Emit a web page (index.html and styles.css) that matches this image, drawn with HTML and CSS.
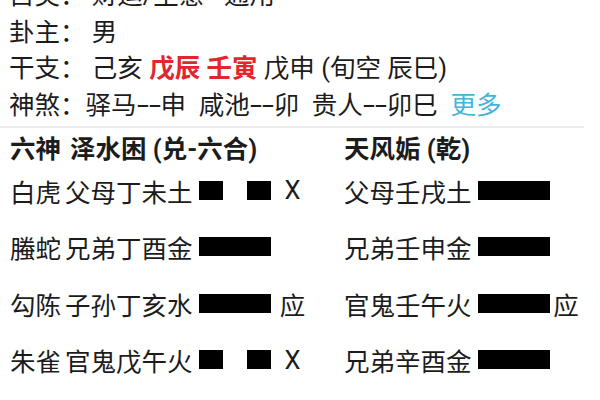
FILE: index.html
```html
<!DOCTYPE html>
<html lang="zh">
<head>
<meta charset="utf-8">
<link rel="stylesheet" href="styles.css">
</head>
<body>
<div class="info">
  <div class="row"><span class="lbl">占类：</span> 财运/生意 - 通用</div>
  <div class="row"><span class="lbl">卦主：</span> 男</div>
  <div class="row"><span class="lbl">干支：</span> 己亥 <span class="red">戊辰 壬寅</span> 戊申 (旬空 辰巳)</div>
  <div class="row"><span class="lbl">神煞：</span>驿马<span class="dash">--</span>申 &nbsp;咸池<span class="dash">--</span>卯 &nbsp;贵人<span class="dash">--</span>卯巳 &nbsp;<span class="more">更多</span></div>
</div>
<div class="sep"></div>
<div class="hex">
  <div class="cell god head">六神</div>
  <div class="cell left head"><span class="gua">泽水困 (兑-六合)</span></div>
  <div class="cell right head">天风姤 (乾)</div>

  <div class="cell god">白虎</div>
  <div class="cell left"><span class="yao">父母丁未土</span><span class="bar yin"><i></i><i></i></span><span class="mark">X</span></div>
  <div class="cell right"><span class="yao">父母壬戌土</span><span class="bar yang"></span><span class="mark"></span></div>

  <div class="cell god">螣蛇</div>
  <div class="cell left"><span class="yao">兄弟丁酉金</span><span class="bar yang"></span><span class="mark"></span></div>
  <div class="cell right"><span class="yao">兄弟壬申金</span><span class="bar yang"></span><span class="mark"></span></div>

  <div class="cell god">勾陈</div>
  <div class="cell left"><span class="yao">子孙丁亥水</span><span class="bar yang"></span><span class="mark">应</span></div>
  <div class="cell right"><span class="yao">官鬼壬午火</span><span class="bar yang"></span><span class="mark">应</span></div>

  <div class="cell god">朱雀</div>
  <div class="cell left"><span class="yao">官鬼戊午火</span><span class="bar yin"><i></i><i></i></span><span class="mark">X</span></div>
  <div class="cell right"><span class="yao">兄弟辛酉金</span><span class="bar yang"></span><span class="mark"></span></div>

  <div class="cell god">青龙</div>
  <div class="cell left"><span class="yao">父母戊辰土</span><span class="bar yang"></span><span class="mark"></span></div>
  <div class="cell right"><span class="yao">子孙辛亥水</span><span class="bar yang"></span><span class="mark"></span></div>
</div>
</body>
</html>
```

FILE: styles.css
```css
html, body {
  margin: 0;
  padding: 0;
  background: #ffffff;
}
body {
  width: 600px;
  height: 400px;
  overflow: hidden;
  font-family: Roboto, "Noto Sans CJK SC", sans-serif;
  font-size: 25.5px;
  color: #1c1c1c;
}
.info {
  margin-top: -23px;
  padding-left: 9px;
}
.row {
  line-height: 36.5px;
  white-space: nowrap;
}
.red {
  color: #e2262c;
  font-weight: 700;
}
.more {
  color: #45b3dc;
}
.dash {
  display: inline-block;
  width: 24px;
  text-align: center;
  transform: scaleX(1.7);
}
.sep {
  margin-top: 3px;
  width: 584px;
  height: 2px;
  background: #ececec;
}
.hex {
  display: grid;
  grid-template-columns: 55px 279px 1fr;
  padding-left: 10px;
  padding-top: 0;
  row-gap: 20.5px;
}
.cell {
  display: flex;
  align-items: center;
  height: 36px;
  white-space: nowrap;
}
.head {
  font-weight: 700;
  margin-bottom: -12.5px;
}
.gua {
  padding-left: 5px;
}
.bar {
  display: flex;
  width: 72px;
  height: 19px;
  margin-left: 6px;
}
.yang {
  background: #000;
}
.yin {
  justify-content: space-between;
}
.yin i {
  display: block;
  width: 24px;
  height: 19px;
  background: #000;
}
.left .mark {
  width: 44px;
  text-align: center;
}
.right .mark {
  width: 33px;
  text-align: center;
}
```
